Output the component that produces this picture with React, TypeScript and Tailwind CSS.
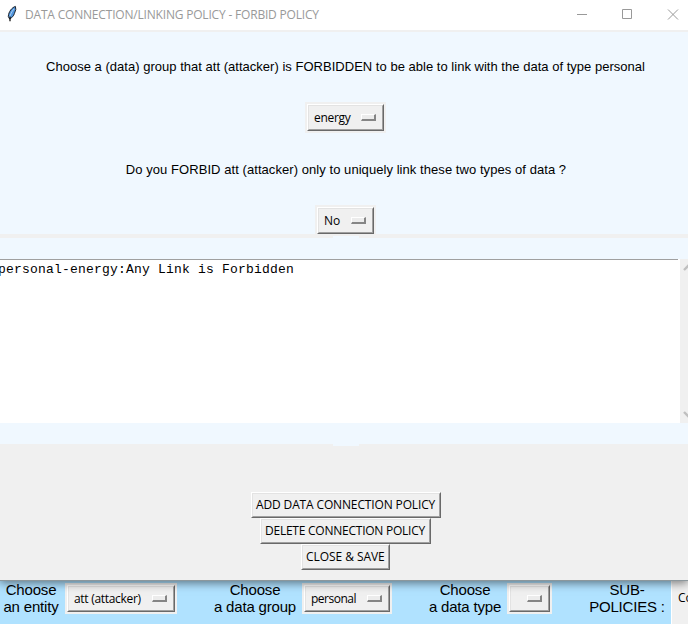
import type { ReactNode } from "react";

const ui = "font-['Open_Sans','Noto_Sans',sans-serif] text-[12px] leading-[16px] text-black";
const arial = "font-['Liberation_Sans',Arial,sans-serif] text-black";

function Bevel({ className, children }: { className: string; children?: ReactNode }) {
  return (
    <div className={`border border-t-white border-l-white border-r-[#696969] border-b-[#696969] bg-[#f0f0f0] ${className}`}>
      <div className="flex h-full items-center border border-t-[#e3e3e3] border-l-[#e3e3e3] border-r-[#a0a0a0] border-b-[#a0a0a0]">
        {children}
      </div>
    </div>
  );
}

function Indicator() {
  return (
    <div className="-mt-px h-[7px] w-[15px] shrink-0 border-t border-r-2 border-b-2 border-l border-t-white border-l-white border-r-[#858585] border-b-[#858585] bg-[#ececec]" />
  );
}

function OptionMenu({ className, text, label }: { className: string; text: string; label: string }) {
  return (
    <div className={`h-[31px] shrink-0 bg-[#f0f0f0] p-[2px] ${className}`}>
      <Bevel className="h-full">
        <div className="flex w-full items-center justify-between pr-[6px] pl-[5px]">
          <span className={`whitespace-nowrap ${ui} ${text}`}>{label}</span>
          <Indicator />
        </div>
      </Bevel>
    </div>
  );
}

function PushButton({ className, text, label }: { className: string; text: string; label: string }) {
  return (
    <button className={`block h-[26px] ${className}`}>
      <Bevel className="h-full">
        <span className={`w-full whitespace-nowrap pl-[3px] text-left ${ui} ${text}`}>{label}</span>
      </Bevel>
    </button>
  );
}

function Feather() {
  return (
    <svg className="mt-[5px] ml-[6px] h-[18px] w-[12px]" viewBox="0 0 12 18">
      <path d="M9.4 1.4C6 2.5 2.6 6.5 2.3 11.5l1.2 2.3c2.5-1 4.2-2.8 4.9-5.3L9.8 4.5Z" fill="#4f94dc" stroke="#1c222b" strokeWidth="1" />
      <path d="M8 4C5.6 6.6 4.3 9.5 3.7 12.5" fill="none" stroke="#a8cdf0" strokeWidth="1" />
      <path d="M4 11.5v4.8" stroke="#000" strokeWidth="1.2" />
    </svg>
  );
}

function TitleBar() {
  return (
    <header className="flex h-[32px] items-start border-b-2 border-[#f0f0f0] bg-white">
      <Feather />
      <h1 className="mt-[6px] ml-[7px] w-[545px] font-['Open_Sans','Noto_Sans',sans-serif] text-[12px] leading-[17px] font-normal tracking-[-0.19px] whitespace-nowrap text-[#999]">
        DATA CONNECTION/LINKING POLICY - FORBID POLICY
      </h1>
      <svg className="h-[28px] w-[118px] shrink-0" viewBox="570 0 118 28" fill="none" stroke="#999" strokeWidth="1">
        <path d="M577 14.5h10" />
        <path d="M622.5 9.5h9v9h-9z" />
        <path d="M668 9.5l10 10M678 9.5l-10 10" />
      </svg>
    </header>
  );
}

function TextArea() {
  return (
    <div className="flex h-[164px] bg-white">
      <div className="w-[678px] border-t border-[#a0a0a0]">
        <p className="-ml-[2px] pt-[2px] font-['Liberation_Mono','Courier_New',monospace] text-[13px] leading-[16px] tracking-[0.2px] whitespace-nowrap text-black">
          personal-energy:Any Link is Forbidden
        </p>
      </div>
      <div className="ml-[2px] w-[8px] bg-[#f0f0f0]">
        <svg className="h-[164px] w-[8px]" viewBox="0 0 8 164" fill="none" stroke="#bfbfbf" strokeWidth="2.4">
          <path d="M4 11l5-5" />
          <path d="M4 153l5 5" />
        </svg>
      </div>
    </div>
  );
}

function Caption({ className, top, bottom }: { className: string; top: string; bottom: string }) {
  return (
    <div className={`-mt-[2px] shrink-0 pl-px text-center text-[15px] leading-[17px] tracking-[-0.18px] whitespace-nowrap ${arial} ${className}`}>
      <div>{top}</div>
      <div>{bottom}</div>
    </div>
  );
}

export default function App() {
  return (
    <div className="h-[624px] w-[688px] overflow-hidden bg-[#b0e2ff]">
      <main className="relative h-[581px] border-b border-[#8c979c] bg-[#f0f0f0] shadow-[0_2px_9px_rgba(0,0,0,0.5)]">
        <TitleBar />
        <section className="flex h-[202px] flex-col items-center bg-[#f0f8ff]">
          <p className={`mt-[27px] ml-[3px] text-[13px] leading-[16px] tracking-[0.02px] whitespace-nowrap ${arial}`}>
            Choose a (data) group that att (attacker) is FORBIDDEN to be able to link with the data of type personal
          </p>
          <OptionMenu className="mt-[27px] ml-[3px] w-[81px]" text="tracking-[-0.3px]" label="energy" />
          <p className={`mt-[29px] ml-[4px] text-[13px] leading-[16px] tracking-[0.06px] whitespace-nowrap ${arial}`}>
            Do you FORBID att (attacker) only to uniquely link these two types of data ?
          </p>
          <OptionMenu className="mt-[27px] ml-[3px] w-[61px]" text="" label="No" />
        </section>
        <div className="h-[4px] pt-[2px] pl-[333px]">
          <div className="h-[2px] w-[26px] bg-[#f0f8ff]" />
        </div>
        <section className="h-[206px] bg-[#f0f8ff] pt-[21px]">
          <TextArea />
        </section>
        <div className="h-[48px] pl-[333px]">
          <div className="h-[2px] w-[26px] bg-[#f0f8ff]" />
        </div>
        <section className="flex flex-col items-center pl-[3px]">
          <PushButton className="ml-px w-[190px]" text="tracking-[-0.14px]" label="ADD DATA CONNECTION POLICY" />
          <PushButton className="w-[171px]" text="tracking-[-0.24px]" label="DELETE CONNECTION POLICY" />
          <PushButton className="w-[89px]" text="tracking-[-0.06px]" label="CLOSE & SAVE" />
        </section>
      </main>
      <footer className="flex h-[43px] items-start pt-[2px]">
        <Caption className="w-[61px]" top="Choose" bottom="an entity" />
        <OptionMenu className="ml-[4px] w-[112px]" text="tracking-[-0.3px]" label="att (attacker)" />
        <Caption className="ml-[34px] w-[87px]" top="Choose" bottom="a data group" />
        <OptionMenu className="ml-[4px] w-[90px]" text="tracking-[-0.5px]" label="personal" />
        <Caption className="ml-[34px] w-[77px]" top="Choose" bottom="a data type" />
        <OptionMenu className="ml-[4px] w-[45px]" text="" label="" />
        <Caption className="ml-[34px] w-[81px]" top="SUB-" bottom="POLICIES :" />
        <div className="-mt-[2px] ml-[4px] flex h-[43px] w-[17px] shrink-0 items-start border-l border-white bg-[#f0f0f0] pt-[9px] pl-[6px]">
          <span className={ui}>Co</span>
        </div>
      </footer>
    </div>
  );
}
